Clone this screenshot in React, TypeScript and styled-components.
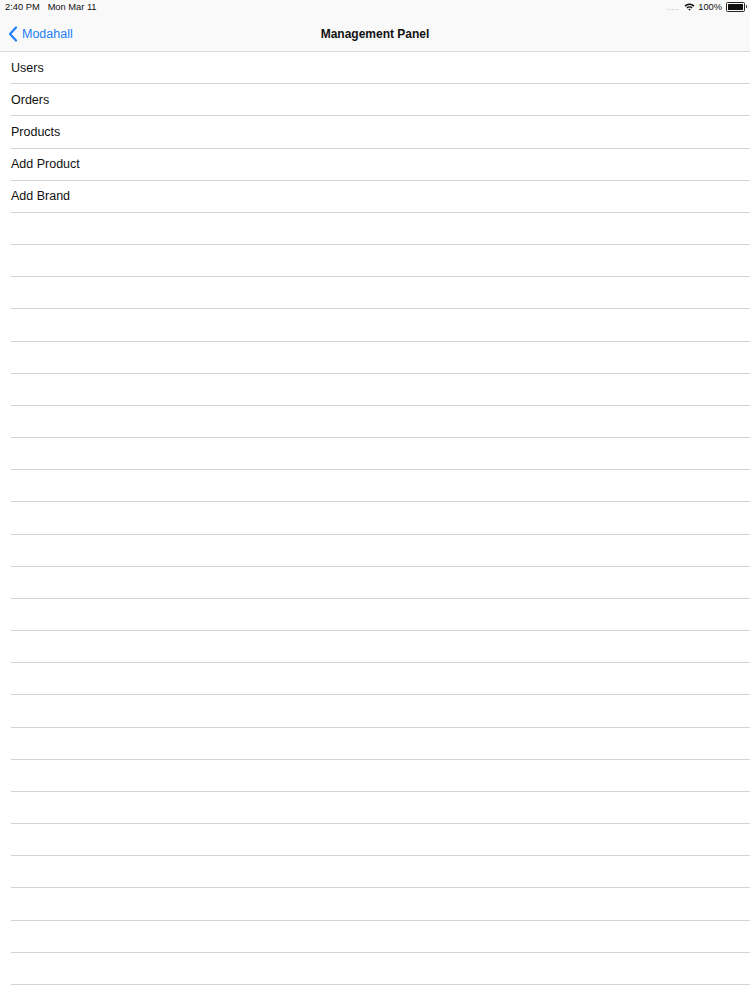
import React from "react";
import styled, { createGlobalStyle } from "styled-components";

const Global = createGlobalStyle`
  html, body { margin: 0; padding: 0; background: #ffffff; }
  body { font-family: "Liberation Sans", Arial, sans-serif; -webkit-font-smoothing: antialiased; }
  #root { width: 750px; height: 1000px; overflow: hidden; }
`;

const Page = styled.div`
  width: 750px;
  height: 1000px;
  display: flex;
  flex-direction: column;
  background: #ffffff;
  overflow: hidden;
`;

const Header = styled.div`
  background: #f9f9f9;
  border-bottom: 1px solid #d8d8d8;
  display: flex;
  flex-direction: column;
`;

const StatusBar = styled.div`
  height: 14px;
  display: flex;
  align-items: center;
  justify-content: space-between;
  padding: 0 2px 0 5px;
  font-size: 9.3px;
  color: #111;
`;

const StatusLeft = styled.div`
  display: flex;
  gap: 8px;
`;

const StatusRight = styled.div`
  display: flex;
  align-items: center;
  gap: 3px;
`;

const Dots = styled.span`
  color: #9a9a9a;
  font-size: 7px;
  letter-spacing: 0.5px;
  margin-right: 2px;
`;

const Battery = styled.div`
  width: 15px;
  height: 6px;
  border: 1px solid #222;
  border-radius: 1.5px;
  padding: 1px;
  position: relative;
  margin-left: 1px;
  margin-right: 3px;
  &::before {
    content: "";
    display: block;
    width: 100%;
    height: 100%;
    background: #111;
    border-radius: 0.5px;
  }
  &::after {
    content: "";
    position: absolute;
    right: -3px;
    top: 2px;
    width: 1.5px;
    height: 3px;
    background: #444;
  }
`;

const NavBar = styled.div`
  height: 37px;
  box-sizing: border-box;
  padding: 3px 8px 0 8px;
  display: grid;
  grid-template-columns: 1fr auto 1fr;
  align-items: center;
`;

const BackButton = styled.div`
  display: flex;
  align-items: center;
  gap: 4px;
  color: #1f7ff5;
  font-size: 12.5px;
`;

const Title = styled.div`
  font-size: 12px;
  font-weight: 600;
  color: #111;
`;

const List = styled.div`
  display: flex;
  flex-direction: column;
`;

const Row = styled.div`
  height: 32.18px;
  box-sizing: border-box;
  flex-shrink: 0;
  margin-left: 11px;
  border-bottom: 1px solid #d3d3d3;
  display: flex;
  align-items: center;
  font-size: 12.5px;
  color: #111;
`;

const items = ["Users", "Orders", "Products", "Add Product", "Add Brand"];

export default function App() {
  const empty = Array.from({ length: 26 });
  return (
    <>
      <Global />
      <Page>
        <Header>
          <StatusBar>
            <StatusLeft>
              <span>2:40 PM</span>
              <span>Mon Mar 11</span>
            </StatusLeft>
            <StatusRight>
              <Dots>.....</Dots>
              <svg width="11" height="8" viewBox="0 0 11 8">
                <path d="M0.5 2.6 A7 7 0 0 1 10.5 2.6 L9.4 3.7 A5.5 5.5 0 0 0 1.6 3.7 Z" fill="#111" />
                <path d="M2.4 4.5 A4.3 4.3 0 0 1 8.6 4.5 L7.5 5.6 A2.8 2.8 0 0 0 3.5 5.6 Z" fill="#111" />
                <path d="M4.3 6.4 A1.7 1.7 0 0 1 6.7 6.4 L5.5 7.6 Z" fill="#111" />
              </svg>
              <span>100%</span>
              <Battery />
            </StatusRight>
          </StatusBar>
          <NavBar>
            <BackButton>
              <svg width="10" height="16" viewBox="0 0 10 16">
                <path d="M8 1.5 L2 8 L8 14.5" fill="none" stroke="#1f7ff5" strokeWidth="2.2" strokeLinecap="round" strokeLinejoin="round" />
              </svg>
              <span>Modahall</span>
            </BackButton>
            <Title>Management Panel</Title>
            <div />
          </NavBar>
        </Header>
        <List>
          {items.map((t) => (
            <Row key={t}>{t}</Row>
          ))}
          {empty.map((_, i) => (
            <Row key={"e" + i} />
          ))}
        </List>
      </Page>
    </>
  );
}
